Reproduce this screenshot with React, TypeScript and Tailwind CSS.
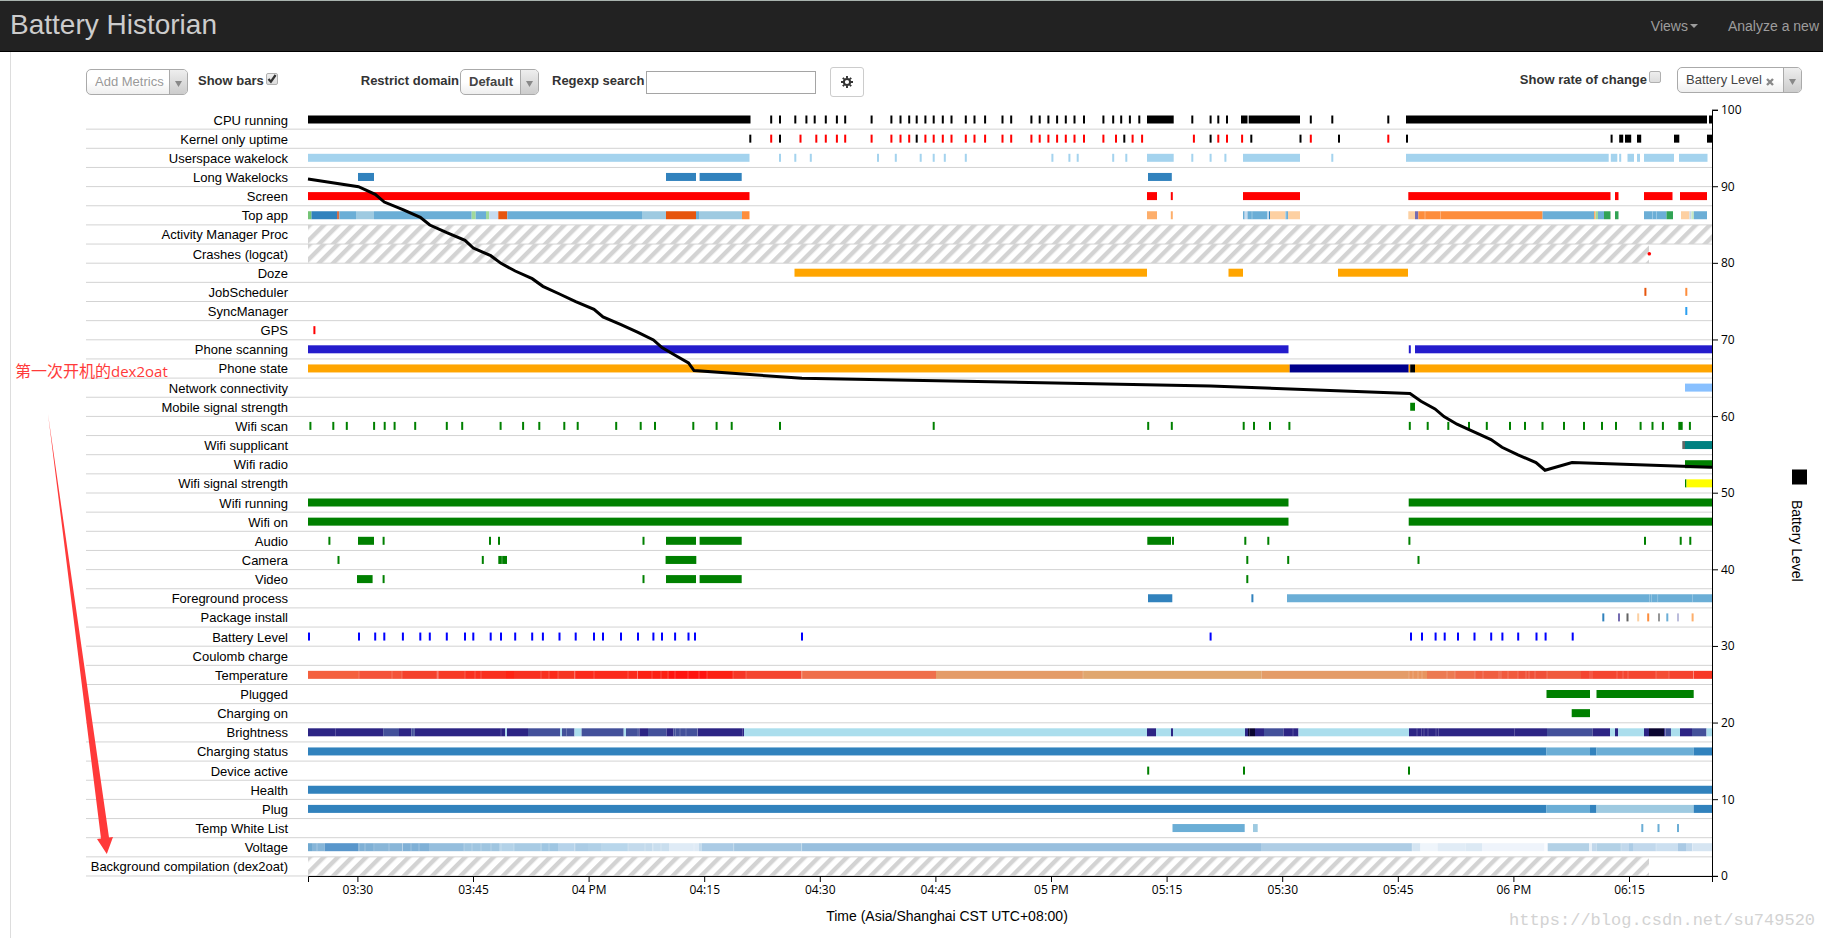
import React from "react";

type Bar = [number, number, string];

interface Row {
  name: string;
  bars?: Bar[];
  // short events, grouped by colour
  ticks?: { color: string; at: number[] }[];
  // end of the hatched "no data" area
  hatch?: number;
}

const LEFT = 308;
const RIGHT = 1712;
const TOP = 110;
const STEP = 19.15;
const BOTTOM = 876;

const GREEN = "#008000";
const ORANGE = "#ffa500";
const SKY = "#a4d3ee";
const BLUE = "#3182bd";
const MID = "#6baed6";
const PALE = "#9ecae1";
const DARK = "#2c2484";
const INDIGO = "#43509a";
const ICE = "#abdeed";
const NIGHT = "#0a0530";

// builds touching bars from a start and a list of [end, color]
const chain = (start: number, parts: [number, string][]): Bar[] => {
  let x = start;
  return parts.map(([end, color]) => {
    const bar: Bar = [x, end, color];
    x = end;
    return bar;
  });
};

const seams = (color: string, at: number[]): Bar[] => at.map((x) => [x - 0.4, x + 0.4, color]);

const rows: Row[] = [
  {
    name: "CPU running",
    bars: [
      [308, 750.5, "#000"],
      [1147, 1173.7, "#000"],
      [1241, 1247.5, "#000"],
      [1248.7, 1300, "#000"],
      [1406, 1707, "#000"],
      [1709, 1712, "#000"],
    ],
    ticks: [
      {
        color: "#000",
        at: [
          771.2, 780, 795.3, 806.4, 814.7, 825.8, 836.9, 845.2, 871.6, 891.4, 900.5, 909.2, 916.7, 925.4, 933.7, 942.8,
          951.5, 965.8, 974.5, 985.1, 1002.5, 1011.2, 1031.4, 1039.7, 1048.4, 1057.1, 1065.8, 1074.5, 1084, 1103.4,
          1113.2, 1121.2, 1129.9, 1139.3, 1192.3, 1210.6, 1218.3, 1227, 1310.8, 1332.3, 1388.3,
        ],
      },
    ],
  },
  {
    name: "Kernel only uptime",
    bars: [
      [1619.2, 1623.2, "#000"],
      [1625, 1631.2, "#000"],
      [1637, 1641.2, "#000"],
      [1674, 1679.3, "#000"],
      [1707, 1712, "#000"],
    ],
    ticks: [
      { color: "#000", at: [750.3, 780, 916.7, 1124.3, 1210.6, 1251.3, 1300.5, 1339, 1407, 1611.6] },
      {
        color: "#f00",
        at: [
          771.2, 800.5, 816.3, 825.8, 836.9, 845.2, 871.6, 891.4, 900.5, 909.2, 925.4, 933.7, 942.8, 951.5, 965.8,
          974.5, 985.1, 1002.5, 1011.2, 1031.4, 1039.7, 1048.4, 1057.1, 1065.8, 1074.5, 1084, 1103.4, 1116, 1132.6,
          1142.1, 1193.9, 1218.3, 1227, 1242.1, 1310.8, 1388.3,
        ],
      },
    ],
  },
  {
    name: "Userspace wakelock",
    bars: [
      [308, 749.5, SKY],
      [1147, 1173.7, SKY],
      [1243, 1300, SKY],
      [1406, 1608.7, SKY],
      [1610.8, 1617.3, SKY],
      [1627.5, 1634, SKY],
      [1637, 1640, SKY],
      [1644, 1674, SKY],
      [1679, 1707.5, SKY],
    ],
    ticks: [
      {
        color: SKY,
        at: [
          780, 795.3, 810.8, 878, 895.8, 920.7, 933.7, 944.8, 965.8, 1052.4, 1069.4, 1077.7, 1113.2, 1126.3, 1192.3,
          1210.6, 1225.4, 1332.3, 1620.2,
        ],
      },
    ],
  },
  {
    name: "Long Wakelocks",
    bars: [
      [358, 374, BLUE],
      [666, 696, BLUE],
      [699.6, 741.7, BLUE],
      [1148, 1171.8, BLUE],
    ],
  },
  {
    name: "Screen",
    bars: [
      [308, 749.5, "#f00"],
      [1147, 1157, "#f00"],
      [1243, 1300, "#f00"],
      [1408.3, 1610.5, "#f00"],
      [1615, 1618.5, "#f00"],
      [1644, 1672.5, "#f00"],
      [1680, 1707, "#f00"],
    ],
    ticks: [{ color: "#f00", at: [1171.8] }],
  },
  {
    name: "Top app",
    bars: [
      ...chain(308, [
        [311.5, "#74c476"],
        [337, BLUE],
        [339.3, "#d4704a"],
        [356, MID],
        [374, PALE],
        [471.7, MID],
        [475.7, "#a1d99b"],
        [486, MID],
        [489.2, "#a1d99b"],
        [498.3, "#c6dbef"],
        [507.3, "#e6550d"],
        [642, MID],
        [666, PALE],
        [696, "#e6550d"],
        [699, MID],
        [742, PALE],
        [749.5, "#fd8d3c"],
      ]),
      [1147, 1157, "#fdae6b"],
      ...chain(1243, [
        [1244.7, MID],
        [1247.5, "#c6dbef"],
        [1267.5, MID],
        [1269, "#c6dbef"],
        [1270, BLUE],
        [1285.5, "#fdd0a2"],
        [1288, MID],
        [1300, "#fdd0a2"],
      ]),
      ...chain(1408.3, [
        [1415, "#fdd0a2"],
        [1418.3, "#756bb1"],
        [1542.6, "#fd8d3c"],
        [1594, MID],
        [1595.6, "#fdae6b"],
        [1598, "#a1d99b"],
        [1604, MID],
        [1610.5, "#31a354"],
      ]),
      [1615, 1618.5, "#31a354"],
      ...chain(1644, [
        [1666.5, MID],
        [1673, "#31a354"],
      ]),
      ...chain(1681, [
        [1689.5, "#fdd0a2"],
        [1691.5, "#c6dbef"],
        [1693.8, "#c7e9c0"],
        [1707, MID],
      ]),
      ...seams("#ffffff66", [1252, 1286, 1425, 1440.5, 1652.5, 1656.5]),
    ],
    ticks: [{ color: "#fdae6b", at: [1171.8] }],
  },
  { name: "Activity Manager Proc", hatch: 1712 },
  { name: "Crashes (logcat)", hatch: 1649 },
  {
    name: "Doze",
    bars: [
      [794.5, 1147, ORANGE],
      [1228.5, 1243, ORANGE],
      [1338, 1408, ORANGE],
    ],
  },
  {
    name: "JobScheduler",
    ticks: [
      { color: "#e6550d", at: [1645.4] },
      { color: "#fd8d3c", at: [1686.3] },
    ],
  },
  { name: "SyncManager", ticks: [{ color: "#2b9ff0", at: [1686.3] }] },
  { name: "GPS", ticks: [{ color: "#f00", at: [314.4] }] },
  {
    name: "Phone scanning",
    bars: [
      [308, 1288.5, "#241ccc"],
      [1415, 1712, "#241ccc"],
    ],
    ticks: [{ color: "#241ccc", at: [1409.8] }],
  },
  {
    name: "Phone state",
    bars: chain(308, [
      [1289.7, ORANGE],
      [1408.7, "#00008b"],
      [1410.2, ORANGE],
      [1415, "#000"],
      [1712, ORANGE],
    ]),
  },
  { name: "Network connectivity", bars: [[1685, 1712, "#88c0ff"]] },
  { name: "Mobile signal strength", bars: [[1410.2, 1415, GREEN]] },
  {
    name: "Wifi scan",
    bars: [[1678.3, 1682.7, GREEN]],
    ticks: [
      {
        color: GREEN,
        at: [
          310.4, 333.3, 346.8, 374.1, 384.7, 394.6, 415.2, 446.8, 462.2, 500.6, 523.1, 539.3, 564.3, 577.7, 616.2,
          640.7, 655, 693.3, 716.6, 731.7, 780, 933.7, 1148.2, 1171.8, 1243.7, 1254, 1270, 1289.4, 1409.8, 1427.7,
          1448.3, 1469, 1486.8, 1510, 1525, 1542.5, 1564, 1584, 1602, 1616, 1640.6, 1652.5, 1662.9, 1689.9,
        ],
      },
    ],
  },
  {
    name: "Wifi supplicant",
    bars: [
      [1682.3, 1685, "#666"],
      [1685, 1712, "#008080"],
    ],
  },
  { name: "Wifi radio", bars: [[1685, 1712, GREEN]] },
  {
    name: "Wifi signal strength",
    bars: [
      [1685, 1686.5, GREEN],
      [1686.5, 1712, "#ff0"],
    ],
  },
  {
    name: "Wifi running",
    bars: [
      [308, 1288.5, GREEN],
      [1408.7, 1712, GREEN],
    ],
  },
  {
    name: "Wifi on",
    bars: [
      [308, 1288.5, GREEN],
      [1408.7, 1712, GREEN],
    ],
  },
  {
    name: "Audio",
    bars: [
      [358, 374, GREEN],
      [666, 696, GREEN],
      [699.6, 741.7, GREEN],
      [1147.3, 1171, GREEN],
    ],
    ticks: [
      { color: GREEN, at: [329.4, 383.6, 490, 499, 643.5, 1173, 1245.3, 1268.3, 1409.4, 1645, 1680.7, 1690.3] },
    ],
  },
  {
    name: "Camera",
    bars: [
      [498.3, 507, GREEN],
      [665.6, 696.3, GREEN],
      ...seams("#ffffff66", [502]),
    ],
    ticks: [{ color: GREEN, at: [338.5, 482.8, 1247.3, 1288.2, 1418.5] }],
  },
  {
    name: "Video",
    bars: [
      [357, 372.6, GREEN],
      [666, 696, GREEN],
      [699.6, 741.7, GREEN],
    ],
    ticks: [{ color: GREEN, at: [383.6, 643.5, 1247.3] }],
  },
  {
    name: "Foreground process",
    bars: [
      [1148, 1172.3, BLUE],
      [1287, 1712, MID],
      ...seams("#ffffff55", [1649.5, 1651.5, 1657.7, 1692.6]),
    ],
    ticks: [{ color: BLUE, at: [1252.4] }],
  },
  {
    name: "Package install",
    ticks: [
      { color: BLUE, at: [1603.3] },
      { color: "#756bb1", at: [1619] },
      { color: "#636363", at: [1627.5] },
      { color: "#fdd0a2", at: [1638.2] },
      { color: "#fd8d3c", at: [1648.2] },
      { color: "#969696", at: [1659] },
      { color: MID, at: [1667.3] },
      { color: "#bcbddc", at: [1678] },
      { color: "#fdae6b", at: [1692.6] },
    ],
  },
  {
    name: "Battery Level",
    ticks: [
      {
        color: "#00f",
        at: [
          309, 359, 375.2, 384.3, 402.9, 420.3, 429.8, 446.8, 465, 473.3, 490.7, 501, 515.2, 532.2, 542.9, 559.5,
          575.7, 594, 603, 621, 638, 653.4, 662, 675.1, 688.5, 695, 802, 1210.6, 1411, 1422, 1435.6, 1444.7, 1458,
          1474.5, 1491.2, 1502.4, 1518.2, 1536.5, 1545.6, 1572.7,
        ],
      },
    ],
  },
  { name: "Coulomb charge" },
  {
    name: "Temperature",
    bars: [
      ...chain(308, [
        [359, "#f4603e"],
        [402, "#f4533a"],
        [437.5, "#f4412c"],
        [465, "#f73a26"],
        [506, "#f9301f"],
        [514, "#fe2414"],
        [549, "#f83020"],
        [558, "#fb2a1a"],
        [574.5, "#f63623"],
        [637.6, "#fb2a1c"],
        [669, "#fc2013"],
        [707, "#ff1410"],
        [733, "#fc2013"],
        [746, "#f63626"],
        [801.3, "#f44530"],
        [936, "#ef6f4b"],
        [1083, "#e49c68"],
        [1261.6, "#e0a76f"],
        [1409, "#e49c68"],
        [1427, "#e8955f"],
        [1455, "#ec7a52"],
        [1475, "#ef6c4a"],
        [1501, "#f05f40"],
        [1518, "#f15a3d"],
        [1547, "#f05038"],
        [1581, "#f0593c"],
        [1656, "#f44530"],
        [1669, "#f44d35"],
        [1693.5, "#f5422e"],
        [1712, "#f73826"],
      ]),
      ...seams("#ffffff44", [
        359, 392, 402, 437, 438.5, 465, 475, 481, 541, 549, 558, 575, 594, 628, 637.6, 652, 661, 668, 675, 688, 699,
        707, 733, 746, 802, 1083, 1409, 1413, 1418, 1422, 1447, 1455, 1475, 1483, 1499, 1501, 1508, 1518, 1526, 1529,
        1535, 1547, 1590, 1592, 1617, 1623, 1628, 1656, 1669, 1693.5,
      ]),
    ],
  },
  {
    name: "Plugged",
    bars: [
      [1546.5, 1590, GREEN],
      [1596.5, 1693.7, GREEN],
    ],
  },
  { name: "Charging on", bars: [[1571.7, 1590, GREEN]] },
  {
    name: "Brightness",
    bars: [
      ...chain(308, [
        [383.2, DARK],
        [399, INDIGO],
        [411, DARK],
        [415, INDIGO],
        [505.3, DARK],
        [507, ICE],
        [528, DARK],
        [560.3, INDIGO],
        [562, ICE],
        [574.5, INDIGO],
        [581.6, ICE],
        [623.7, INDIGO],
        [626, ICE],
        [639.5, INDIGO],
        [648, DARK],
        [666.5, INDIGO],
        [673.5, DARK],
        [697.7, INDIGO],
        [744, DARK],
        [1147, ICE],
        [1156, DARK],
        [1171, ICE],
        [1173, DARK],
        [1245, ICE],
        [1248, DARK],
        [1255, NIGHT],
        [1264, DARK],
        [1283.5, INDIGO],
        [1298.5, DARK],
        [1409, ICE],
        [1547, DARK],
        [1592.7, INDIGO],
        [1610, DARK],
        [1615, ICE],
        [1618, DARK],
        [1644, ICE],
        [1649, DARK],
        [1664, NIGHT],
        [1665.5, DARK],
        [1671, INDIGO],
        [1680, ICE],
        [1692, DARK],
        [1706.5, INDIGO],
        [1712, ICE],
      ]),
      ...seams("#ffffff44", [
        335.5, 411.5, 414, 501, 566.5, 638, 675.5, 680, 686, 697.5, 742.5, 1249.5, 1293, 1417, 1421.5, 1424, 1428,
        1436, 1438.5, 1514.5, 1665,
      ]),
    ],
  },
  {
    name: "Charging status",
    bars: chain(308, [
      [1546.5, BLUE],
      [1590, MID],
      [1596.5, BLUE],
      [1693.7, MID],
      [1712, BLUE],
    ]),
  },
  { name: "Device active", ticks: [{ color: GREEN, at: [1148.2, 1244, 1409] }] },
  { name: "Health", bars: [[308, 1712, BLUE]] },
  {
    name: "Plug",
    bars: chain(308, [
      [1546.5, BLUE],
      [1590, MID],
      [1596.5, BLUE],
      [1693.7, PALE],
      [1712, BLUE],
    ]),
  },
  {
    name: "Temp White List",
    bars: [
      [1172.5, 1244.7, MID],
      [1253, 1257.7, PALE],
    ],
    ticks: [{ color: MID, at: [1642.3, 1658.5, 1678] }],
  },
  {
    name: "Voltage",
    bars: [
      ...chain(308, [
        [312, "#6fa8d0"],
        [324.6, "#86b5d8"],
        [358, "#5896cb"],
        [375, "#7fb0d5"],
        [402.6, "#89b6d8"],
        [429, "#7fb0d6"],
        [464, "#95bedd"],
        [499, "#9fc5e0"],
        [514, "#b3d2e8"],
        [542, "#a8cbe4"],
        [558, "#9fc6e2"],
        [574.5, "#b6d3ea"],
        [588, "#abcce5"],
        [603, "#b0d0e7"],
        [628, "#b8d6eb"],
        [652.6, "#c3daec"],
        [669, "#c9deee"],
        [699, "#dfebf6"],
        [701.5, "#c3daec"],
        [733.8, "#abcbe5"],
        [801.7, "#a3c6e1"],
        [1261, "#98bfde"],
        [1412, "#aecde5"],
        [1420.5, "#d5e5f2"],
        [1437.6, "#eff5fb"],
        [1465.5, "#e1ecf6"],
        [1482, "#dce9f4"],
        [1544.5, "#eff4fb"],
        [1547.7, "#fafcff"],
        [1589.3, "#b3d1e6"],
        [1592, "#e8f0f8"],
        [1596.5, "#c0d7eb"],
        [1621, "#b3d1e6"],
        [1629, "#c1d8ec"],
        [1633, "#abcbe5"],
        [1656, "#c1d8ec"],
        [1678, "#cbdff0"],
        [1686, "#a9c9e4"],
        [1692.6, "#c1d8ec"],
        [1712, "#d6e5f2"],
      ]),
      ...seams("#ffffff55", [
        317, 359, 365, 374, 389, 402.6, 411, 419, 464, 472, 481, 491, 501, 514, 541, 549, 575, 602, 628, 645, 653,
        661, 694, 733.8, 801.7, 1412, 1545, 1621, 1656, 1692.6,
      ]),
    ],
  },
  { name: "Background compilation (dex2oat)", hatch: 1649 },
];

const battery: [number, number][] = [
  [308, 91], [358.5, 90], [375.2, 89], [384.3, 88], [402.9, 87], [420.3, 86], [429.8, 85], [446.8, 84], [465, 83],
  [473.3, 82], [490.7, 81], [501, 80], [515.2, 79], [532.2, 78], [542.9, 77], [559.5, 76], [575.7, 75], [594, 74],
  [603, 73], [621, 72], [638, 71], [653.4, 70], [662, 69], [675.1, 68], [688.5, 67], [694, 66], [802, 65],
  [1210.6, 64], [1410, 63], [1421, 62], [1435, 61], [1444, 60], [1457, 59], [1474, 58], [1491, 57],
  [1502, 56], [1518, 55], [1536, 54], [1545, 53], [1572, 54], [1712, 53.4],
];

const times = ["03:30", "03:45", "04 PM", "04:15", "04:30", "04:45", "05 PM", "05:15", "05:30", "05:45", "06 PM", "06:15"];
const levels = [0, 10, 20, 30, 40, 50, 60, 70, 80, 90, 100];

const timeX = (i: number) => 357.9 + i * 115.6;
const levelY = (v: number) => BOTTOM + 0.3 - v * 7.662;

const Arrow = () => (
  <span className="pointer-events-none flex w-[18px] items-center justify-center self-stretch rounded-r border-l border-[#aaa] bg-gradient-to-b from-[#eee] to-[#ccc]">
    <svg className="mt-1 h-[6px] w-[7px]" viewBox="0 0 7 6" fill="#888" aria-hidden="true">
      <path d="M0 0h7L3.5 6z" />
    </svg>
  </span>
);

const Picker = ({
  label,
  value,
  className,
  clearable,
}: {
  label: string;
  value: string;
  className: string;
  clearable?: boolean;
}) => (
  <div
    className={`flex h-[26px] items-center rounded-[5px] border border-[#aaa] bg-gradient-to-t from-[#eee] to-white to-50% ${className}`}
  >
    <select aria-label={label} className="h-full min-w-0 flex-1 appearance-none bg-transparent pl-2 outline-none">
      <option>{value}</option>
    </select>
    {clearable && (
      <button type="button" aria-label="Remove metric" className="mt-1 mr-[9px]">
        <svg className="h-[8px] w-[8px]" viewBox="0 0 8 8" stroke="#888" strokeWidth="2.4" aria-hidden="true">
          <path d="M1 1l6 6M7 1L1 7" />
        </svg>
      </button>
    )}
    <Arrow />
  </div>
);

const Check = ({ id, checked }: { id: string; checked?: boolean }) => (
  <span className="relative mb-[6px] ml-[2px] h-3 w-3">
    <input
      id={id}
      type="checkbox"
      defaultChecked={checked}
      className="peer block h-3 w-3 appearance-none rounded-[2px] border border-[#b0b0b0] bg-gradient-to-b from-[#eee] to-[#ddd]"
    />
    <svg
      className="pointer-events-none absolute top-0 left-0 hidden h-3 w-3 peer-checked:block"
      viewBox="0 0 12 12"
      fill="none"
      stroke="#333"
      strokeWidth="2.2"
      aria-hidden="true"
    >
      <path d="M2.5 6l2.4 2.7L9.6 2" />
    </svg>
  </span>
);

const Header = () => (
  <header className="flex h-[52px] items-center justify-between border-t border-b border-t-[#a9b3ae] border-b-black bg-[#222] pr-1 pl-[10px]">
    <h1 className="pb-[2px] text-[28px] leading-9 text-[#ccc]">Battery Historian</h1>
    <nav className="flex gap-[30px] text-sm text-[#9d9d9d]">
      <a href="#views" className="flex items-center">
        Views
        <svg className="ml-[2px] h-1 w-2" viewBox="0 0 8 4" fill="currentColor" aria-hidden="true">
          <path d="M0 0h8L4 4z" />
        </svg>
      </a>
      <a href="#analyze">Analyze a new</a>
    </nav>
  </header>
);

const Toolbar = () => (
  <div className="flex h-12 items-center pt-3 pr-[21px] pl-[75px] text-[13px] text-[#444]">
    <Picker label="Add Metrics" value="Add Metrics" className="w-[102px] text-[#999]" />
    <label htmlFor="show-bars" className="mb-[2px] ml-[10px] font-bold text-[#333]">
      Show bars
    </label>
    <Check id="show-bars" checked />
    <span className="mb-[2px] ml-[83px] font-bold text-[#333]">Restrict domain</span>
    <Picker label="Restrict domain" value="Default" className="ml-px w-[79px] font-bold" />
    <label htmlFor="regexp" className="mb-[2px] ml-[13px] font-bold text-[#333]">
      Regexp search
    </label>
    <input id="regexp" type="text" className="ml-px h-[23px] w-[170px] border border-[#a5a5a5] px-1 outline-none" />
    <button
      type="button"
      aria-label="Settings"
      className="ml-[14px] flex h-[30px] w-[34px] items-center justify-center rounded-[3px] border border-[#ccc] bg-white text-[#333]"
    >
      <svg className="h-3 w-3" viewBox="0 0 12 12" aria-hidden="true">
        <circle cx="6" cy="6" r="3.1" fill="none" stroke="currentColor" strokeWidth="2" />
        <path
          d="M6 0v2M6 10v2M0 6h2M10 6h2M1.8 1.8l1.4 1.4M8.8 8.8l1.4 1.4M10.2 1.8L8.8 3.2M3.2 8.8l-1.4 1.4"
          stroke="currentColor"
          strokeWidth="1.9"
        />
      </svg>
    </button>
    <div className="mb-1 ml-auto flex items-center">
      <label htmlFor="rate" className="mb-px font-bold text-[#333]">
        Show rate of change
      </label>
      <Check id="rate" />
      <Picker label="Line metric" value="Battery Level" className="ml-4 w-[125px]" clearable />
    </div>
  </div>
);

const RowView = ({ row, index }: { row: Row; index: number }) => {
  const top = TOP + index * STEP;
  return (
    <g>
      <g transform={`translate(0 ${top})`}>
        {row.hatch && <rect x={LEFT} y="0" width={row.hatch - LEFT} height={STEP} fill="url(#hatch)" />}
        <path d={`M86 ${STEP}H${RIGHT}`} stroke="#d3d3d3" />
        {row.bars?.map(([x1, x2, color], i) => (
          <rect key={i} x={x1} y="5.5" width={x2 - x1} height="8" fill={color} />
        ))}
        {row.ticks?.map(({ color, at }) =>
          at.map((x) => <rect key={color + x} x={x - 1} y="5.5" width="2" height="8" fill={color} />)
        )}
      </g>
      <text x="288" y={Math.floor(top + 15)} textAnchor="end" fontSize="13">
        {row.name}
      </text>
    </g>
  );
};

const Chart = () => (
  <svg className="block h-auto w-full" viewBox="11 100 1812 838" role="img" aria-label="Battery history timeline">
    <defs>
      <pattern
        id="hatch"
        width="10"
        height="10"
        patternUnits="userSpaceOnUse"
        patternTransform="translate(321 0) rotate(45)"
      >
        <rect width="4.4" height="10" fill="#d3d3d3" />
      </pattern>
    </defs>

    {rows.map((row, i) => (
      <RowView key={row.name} row={row} index={i} />
    ))}
    <circle cx="1649.3" cy="253.7" r="1.8" fill="#f00" />

    <polyline
      points={battery.map(([x, v]) => `${x},${levelY(v)}`).join(" ")}
      fill="none"
      stroke="#000"
      strokeWidth="3"
    />

    <g className="font-['Open_Sans',sans-serif]" fontSize="12">
      <path d={`M308.5 882V${BOTTOM + 0.5}H1712.5V882`} fill="none" stroke="#000" />
      {times.map((t, i) => (
        <g key={t}>
          <path d={`M${timeX(i)} ${BOTTOM}v6`} stroke="#000" />
          <text x={timeX(i)} y="894" textAnchor="middle">
            {t}
          </text>
        </g>
      ))}
      <path d={`M1718 110.5H1712.5V${BOTTOM + 0.5}H1718`} fill="none" stroke="#000" />
      {levels.map((v) => (
        <g key={v}>
          <path d={`M1712 ${levelY(v)}h6`} stroke="#000" />
          <text x="1721" y={Math.round(levelY(v)) + 4}>
            {v}
          </text>
        </g>
      ))}
    </g>
    <text x="947" y="921" textAnchor="middle" fontSize="14">
      Time (Asia/Shanghai CST UTC+08:00)
    </text>

    <rect x="1792" y="469.5" width="15" height="15" />
    <text transform="translate(1792 500) rotate(90)" fontSize="14">
      Battery Level
    </text>

    <g fill="#ff3a3a">
      <text x="15" y="377" fontSize="16" className="font-['Noto_Sans_CJK_SC',sans-serif]">
        第一次开机的
        <tspan className="font-['Open_Sans',sans-serif]" fontSize="15">
          dex2oat
        </tspan>
      </text>
      <path d="M48 414L109 837.5l4-.5-6.2 17-9.8-15 4-.5L75 630z" />
    </g>

    <text x="1509" y="925" fontSize="17" fill="#d3d3d3" className="font-['Liberation_Mono',monospace]">
      https://blog.csdn.net/su749520
    </text>
  </svg>
);

const App = () => {
  return (
    <div className="overflow-hidden bg-white font-['Liberation_Sans',Arial,sans-serif] text-black">
      <Header />
      <main className="ml-[10px] border-l border-[#ddd]">
        <Toolbar />
        <Chart />
      </main>
    </div>
  );
};

export default App;
